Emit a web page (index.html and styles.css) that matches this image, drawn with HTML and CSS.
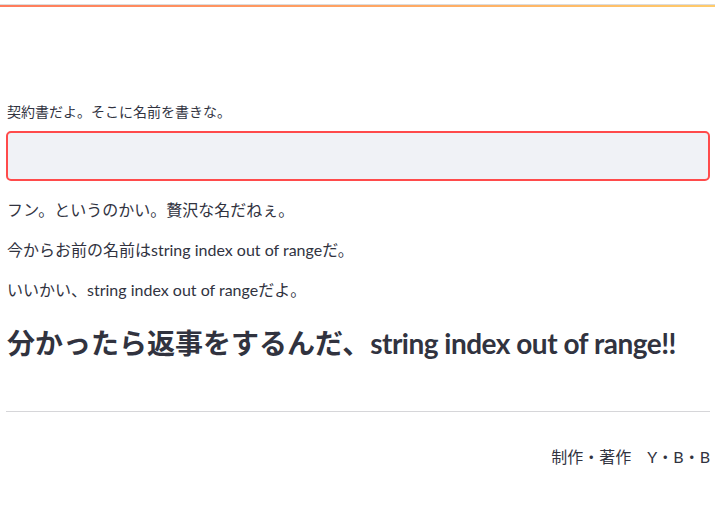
FILE: index.html
```html
<!DOCTYPE html>
<html lang="ja">
<head>
    <meta charset="UTF-8">
    <meta name="viewport" content="width=device-width, initial-scale=1.0">
    <title>契約書</title>
    <link rel="stylesheet" href="styles.css">
</head>
<body>
    <div class="decoration"></div>
    <main class="block">
        <label class="field-label" for="name">契約書だよ。そこに名前を書きな。</label>
        <input type="text" id="name" class="name-input">
        <p class="line line-first">フン。というのかい。贅沢な名だねぇ。</p>
        <p class="line">今からお前の名前はstring index out of rangeだ。</p>
        <p class="line">いいかい、string index out of rangeだよ。</p>
        <h3 class="answer">分かったら返事をするんだ、<span class="answer-name">string index out of range!!</span></h3>
        <hr class="divider">
        <p class="credit">制作・著作　Y・B・B</p>
    </main>
</body>
</html>
```

FILE: styles.css
```css
body {
    margin: 0;
    background: #ffffff;
    color: #31333f;
    font-family: "Lato", "Noto Sans CJK JP", sans-serif;
}
.decoration {
    margin-top: 4px;
    border-top: 1px solid #dcdcdc;
    height: 2px;
    background: linear-gradient(90deg, #ff7b5c 0%, #ffa463 50%, #ffcb6b 100%);
}
.block {
    display: flex;
    flex-direction: column;
    padding: 95px 5px 40px 6px;
}
.field-label {
    font-size: 14px;
    line-height: 20px;
    padding-left: 1px;
    margin-bottom: 9px;
}
.name-input {
    height: 50px;
    box-sizing: border-box;
    border: 2px solid #ff4b4b;
    border-radius: 5px;
    background: #f0f2f6;
    outline: none;
    font-size: 16px;
    padding: 0 12px;
}
.line {
    margin: 0 0 0 1px;
    font-size: 16px;
    line-height: 24px;
    margin-top: 16px;
}
.line-first {
    margin-top: 17px;
}
.answer {
    margin: 24px 0 0 1px;
    font-size: 28px;
    line-height: 34px;
    font-weight: 700;
}
.answer-name {
    letter-spacing: -0.5px;
}
.divider {
    width: 100%;
    margin: 51px 0 0 0;
    border: none;
    border-top: 1px solid #d6d6d9;
}
.credit {
    margin: 33px 0 0 0;
    text-align: right;
    font-size: 16px;
    line-height: 24px;
}
```
